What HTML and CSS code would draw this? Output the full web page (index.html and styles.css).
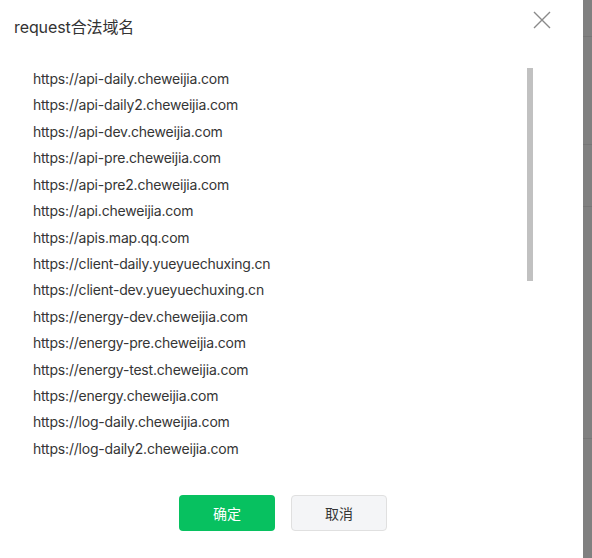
FILE: index.html
```html
<!DOCTYPE html>
<html>
<head>
<meta charset="utf-8">
<link rel="stylesheet" href="styles.css">
</head>
<body>
<div class="page">
  <div class="dialog">
    <div class="header">
      <div class="title">request合法域名</div>
      <div class="close">
        <svg width="18" height="18" viewBox="0 0 18 18"><path d="M1 1L17 17M17 1L1 17" stroke="#8a8a8a" stroke-width="1.4" fill="none"/></svg>
      </div>
    </div>
    <div class="body">
      <ul class="list">
        <li>https://api-daily.cheweijia.com</li>
        <li>https://api-daily2.cheweijia.com</li>
        <li>https://api-dev.cheweijia.com</li>
        <li>https://api-pre.cheweijia.com</li>
        <li>https://api-pre2.cheweijia.com</li>
        <li>https://api.cheweijia.com</li>
        <li>https://apis.map.qq.com</li>
        <li>https://client-daily.yueyuechuxing.cn</li>
        <li>https://client-dev.yueyuechuxing.cn</li>
        <li>https://energy-dev.cheweijia.com</li>
        <li>https://energy-pre.cheweijia.com</li>
        <li>https://energy-test.cheweijia.com</li>
        <li>https://energy.cheweijia.com</li>
        <li>https://log-daily.cheweijia.com</li>
        <li>https://log-daily2.cheweijia.com</li>
      </ul>
      <div class="thumb"></div>
    </div>
    <div class="footer">
      <button class="btn primary">确定</button>
      <button class="btn default">取消</button>
    </div>
  </div>
  <div class="side">
    <div class="seg s1"></div>
    <div class="seg s2"></div>
    <div class="seg s3"></div>
    <div class="seg s4"></div>
    <div class="seg s5"></div>
  </div>
</div>
</body>
</html>
```
FILE: styles.css
```css
* { box-sizing: border-box; }
html, body { margin: 0; padding: 0; }
body {
  width: 592px;
  height: 558px;
  overflow: hidden;
  background: #fff;
  font-family: Inter, "Noto Sans CJK SC", sans-serif;
  color: #353535;
}
.page {
  display: flex;
  width: 592px;
  height: 558px;
}
.dialog {
  width: 583px;
  height: 558px;
  background: #fff;
  display: flex;
  flex-direction: column;
}
.header {
  display: flex;
  justify-content: space-between;
  align-items: flex-start;
  height: 58px;
}
.title {
  font-size: 16px;
  line-height: 20px;
  padding: 17px 0 0 14px;
  color: #333;
  letter-spacing: -0.1px;
}
.close {
  padding: 11px 32px 0 0;
  line-height: 0;
}
.body {
  position: relative;
  height: 404px;
  overflow: hidden;
}
.list {
  list-style: none;
  margin: 0;
  padding: 8px 0 0 33px;
}
.list li {
  font-size: 14px;
  height: 26.43px;
  line-height: 26.43px;
  letter-spacing: -0.2px;
  white-space: nowrap;
}
.thumb {
  position: absolute;
  left: 527px;
  top: 10px;
  width: 6px;
  height: 213px;
  background: #c1c1c1;
}
.footer {
  display: flex;
  gap: 16px;
  padding: 33px 0 0 179px;
}
.btn {
  width: 96px;
  height: 36px;
  border-radius: 4px;
  font-family: "Noto Sans CJK SC", sans-serif;
  font-size: 14px;
  cursor: pointer;
}
.primary {
  background: #07c160;
  color: #fff;
  border: none;
}
.default {
  background: #f4f5f7;
  color: #353535;
  border: 1px solid #e0e0e0;
}
.side {
  width: 9px;
  height: 558px;
  background: #808080;
  display: flex;
  flex-direction: column;
}
.seg { border-bottom: 1px solid #767676; }
.s1 { height: 37px; }
.s2 { height: 108px; }
.s3 { height: 62px; }
.s4 { height: 232px; }
.s5 { height: 61px; border-bottom: none; }
```
